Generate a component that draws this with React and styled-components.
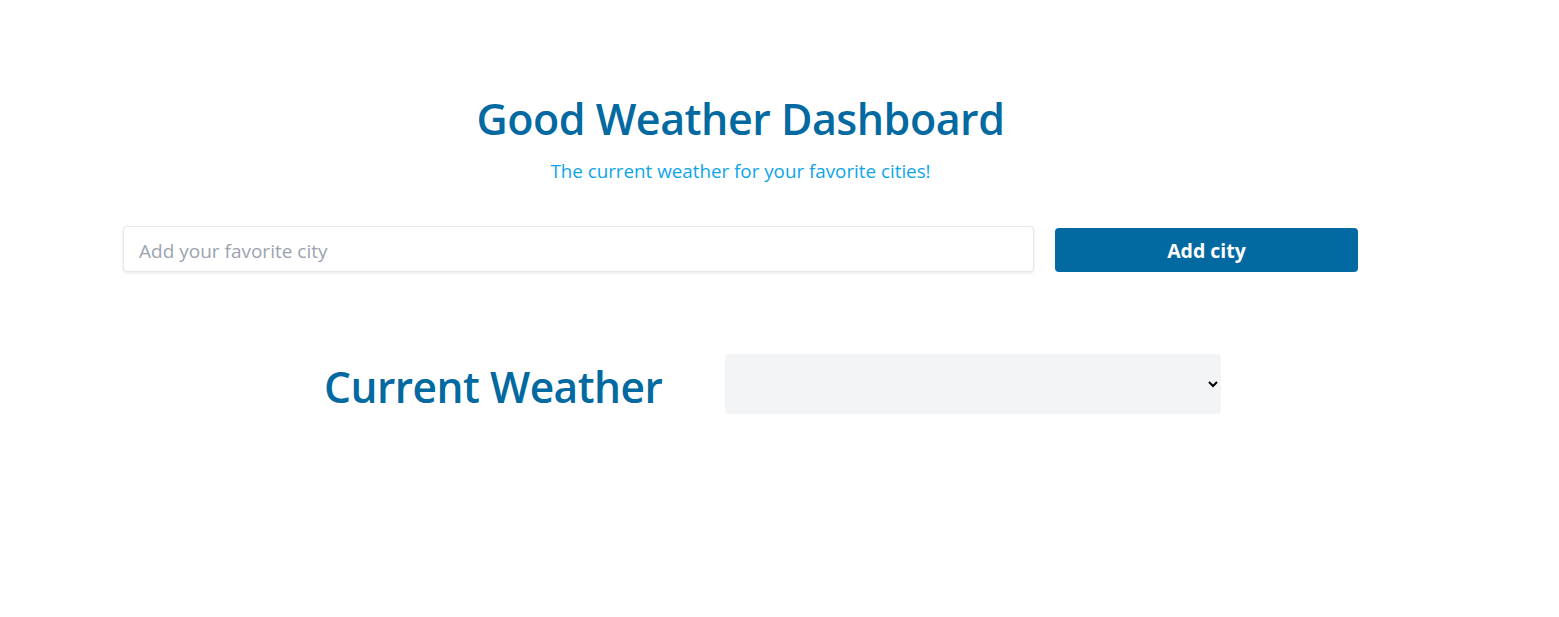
import React, { useState } from 'react'
import styled, { createGlobalStyle } from 'styled-components'

const GlobalStyle = createGlobalStyle`
  body {
    margin: 0;
    background: #ffffff;
    font-family: "Open Sans", "Noto Sans", sans-serif;
  }
`

const Page = styled.div`
  padding: 90px 201px 0 123px;
`

const Header = styled.header`
  text-align: center;
`

const Title = styled.h1`
  margin: 0;
  font-size: 43px;
  line-height: 58px;
  font-weight: 600;
  color: #0369a1;
  letter-spacing: -0.5px;
`

const Subtitle = styled.p`
  margin: 11px 0 0;
  font-size: 18.8px;
  line-height: 24px;
  color: #0ea5e9;
`

const AddRow = styled.form`
  display: flex;
  align-items: flex-start;
  gap: 21px;
  margin-top: 43px;
`

const CityInput = styled.input`
  flex: 1;
  height: 46px;
  box-sizing: border-box;
  padding: 3px 15px 0;
  border: 1px solid #e5e7eb;
  border-radius: 4px;
  box-shadow: 0 1px 3px rgba(0, 0, 0, 0.1);
  font-family: inherit;
  font-size: 19px;
  color: #374151;
  outline: none;

  &::placeholder {
    color: #9ca3af;
  }
`

const Button = styled.button`
  width: 303px;
  height: 44px;
  margin-top: 2px;
  padding-top: 2px;
  border: 0;
  border-radius: 4px;
  background: #0369a1;
  color: #ffffff;
  font-family: inherit;
  font-size: 19.5px;
  font-weight: 700;
  cursor: pointer;
`

const WeatherRow = styled.section`
  display: flex;
  align-items: center;
  gap: 63px;
  margin-top: 80px;
  padding-left: 201px;
`

const SectionTitle = styled.h2`
  margin: 0;
  padding-top: 6px;
  font-size: 42.5px;
  font-weight: 600;
  color: #0369a1;
  letter-spacing: -0.5px;
`

const CitySelect = styled.select`
  width: 496px;
  height: 60px;
  border: 0;
  border-radius: 4px;
  background: #f3f4f6;
  font-family: inherit;
  font-size: 18px;
  padding: 0 8px;
`

const App = () => {
  const [city, setCity] = useState('')
  const [cities, setCities] = useState([])

  const onAdd = (e) => {
    e.preventDefault()
    if (!city.trim()) return
    setCities([...cities, city.trim()])
    setCity('')
  }

  return (
    <Page>
      <GlobalStyle />
      <Header>
        <Title>Good Weather Dashboard</Title>
        <Subtitle>The current weather for your favorite cities!</Subtitle>
      </Header>
      <AddRow onSubmit={onAdd}>
        <CityInput
          placeholder="Add your favorite city"
          value={city}
          onChange={(e) => setCity(e.target.value)}
        />
        <Button type="submit">Add city</Button>
      </AddRow>
      <WeatherRow>
        <SectionTitle>Current Weather</SectionTitle>
        <CitySelect>
          {cities.map((c) => (
            <option key={c}>{c}</option>
          ))}
        </CitySelect>
      </WeatherRow>
    </Page>
  )
}

export default App
